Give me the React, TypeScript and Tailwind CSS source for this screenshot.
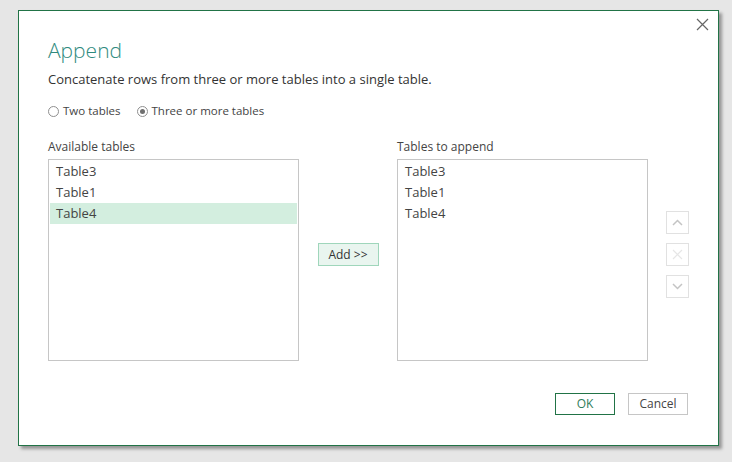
import React from 'react';

const font = { fontFamily: '"Open Sans", "Noto Sans", sans-serif' };

function ListBox({ items, selected }: { items: string[]; selected?: string }) {
    return (
        <div className="w-[251px] h-[202px] border border-[#c6c6c6] bg-white p-px">
            {items.map((t) => (
                <div
                    key={t}
                    className={`h-[21px] pl-[6px] flex items-center text-[13px] text-[#444] ${t === selected ? 'bg-[#d3eedf]' : ''}`}
                >
                    {t}
                </div>
            ))}
        </div>
    );
}

function SideButton({ children }: { children: React.ReactNode }) {
    return (
        <div className="w-[23px] h-[23px] border border-[#e1e1e1] bg-white flex items-center justify-center">
            {children}
        </div>
    );
}

export default function App() {
    return (
        <div className="w-[732px] h-[462px] bg-[#e6e6e6] pt-[10px] pl-[18px]" style={font}>
            <div className="relative w-[701px] h-[436px] bg-white border border-[#217346] shadow-[3px_3px_3px_rgba(0,0,0,0.35)] pl-[29px] pr-[29px] pt-[25px]">
                <button className="absolute top-[6px] right-[9px] w-[14px] h-[14px] flex items-center justify-center">
                    <svg width="13" height="13" viewBox="0 0 13 13">
                        <path d="M1 1 L12 12 M12 1 L1 12" stroke="#666" strokeWidth="1.2" />
                    </svg>
                </button>

                <h1 className="text-[21px] font-light text-[#2f8a7e] leading-[28px]">Append</h1>
                <p className="mt-[6px] text-[13px] text-[#333] leading-[18px]">
                    Concatenate rows from three or more tables into a single table.
                </p>

                <div className="mt-[15px] flex items-center text-[11.5px] text-[#444] leading-[16px]">
                    <label className="flex items-center gap-[4px]">
                        <span className="w-[11px] h-[11px] rounded-full border border-[#8f8f8f] bg-white" />
                        <span>Two tables</span>
                    </label>
                    <label className="flex items-center gap-[4px] ml-[16px]">
                        <span className="w-[11px] h-[11px] rounded-full border border-[#8f8f8f] bg-white flex items-center justify-center">
                            <span className="w-[5px] h-[5px] rounded-full bg-[#6f6f6f]" />
                        </span>
                        <span>Three or more tables</span>
                    </label>
                </div>

                <div className="mt-[20px] flex">
                    <div className="shrink-0">
                        <div className="text-[12px] text-[#444] leading-[16px] mb-[4px]">Available tables</div>
                        <ListBox items={['Table3', 'Table1', 'Table4']} selected="Table4" />
                    </div>
                    <div className="w-[98px] shrink-0 flex justify-center pt-[104px]">
                        <button className="w-[61px] h-[23px] border border-[#9fd6bb] bg-[#e9f5ef] text-[12px] text-[#333] leading-none">
                            Add &gt;&gt;
                        </button>
                    </div>
                    <div className="shrink-0">
                        <div className="text-[12px] text-[#444] leading-[16px] mb-[4px]">Tables to append</div>
                        <ListBox items={['Table3', 'Table1', 'Table4']} />
                    </div>
                    <div className="ml-[18px] shrink-0 pt-[72px] flex flex-col gap-[9px]">
                        <SideButton>
                            <svg width="11" height="7" viewBox="0 0 11 7">
                                <path d="M1 6 L5.5 1.5 L10 6" fill="none" stroke="#c4c4c4" strokeWidth="1.5" />
                            </svg>
                        </SideButton>
                        <SideButton>
                            <svg width="11" height="11" viewBox="0 0 11 11">
                                <path d="M1 1 L10 10 M10 1 L1 10" stroke="#e6e6e6" strokeWidth="1.2" />
                            </svg>
                        </SideButton>
                        <SideButton>
                            <svg width="11" height="7" viewBox="0 0 11 7">
                                <path d="M1 1 L5.5 5.5 L10 1" fill="none" stroke="#c4c4c4" strokeWidth="1.5" />
                            </svg>
                        </SideButton>
                    </div>
                </div>

                <div className="mt-[32px] pr-[1px] flex justify-end gap-[13px]">
                    <button className="w-[60px] h-[22px] border border-[#217346] bg-white text-[12px] text-[#2f7d5a] leading-none">
                        OK
                    </button>
                    <button className="w-[60px] h-[22px] border border-[#c6c6c6] bg-white text-[12px] text-[#444] leading-none">
                        Cancel
                    </button>
                </div>
            </div>
        </div>
    );
}
